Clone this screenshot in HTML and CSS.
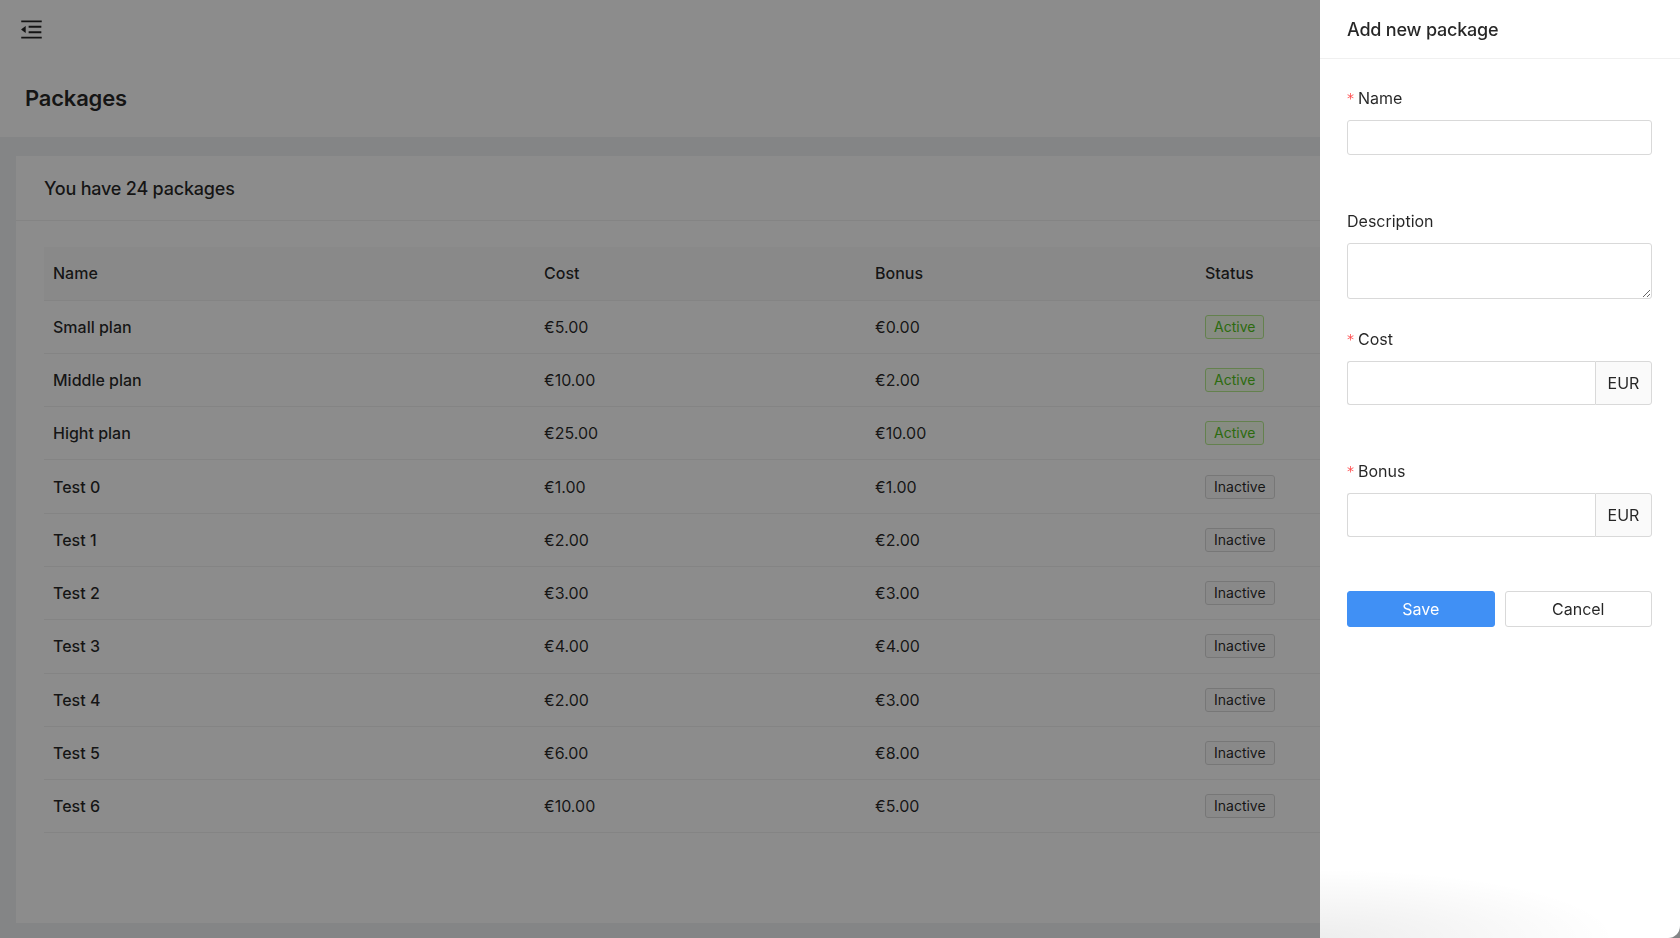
FILE: index.html
```html
<!DOCTYPE html>
<html lang="en">
<head>
  <meta charset="UTF-8">
  <meta name="viewport" content="width=device-width, initial-scale=1.0">
  <title>Packages</title>
  <link rel="stylesheet" href="styles.css">
</head>
<body>
  <div class="layout">
    <header class="topbar">
      <svg class="menu-icon" viewBox="64 64 896 896" fill="currentColor">
        <path d="M408 442h480c4.4 0 8-3.6 8-8v-56c0-4.4-3.6-8-8-8H408c-4.4 0-8 3.6-8 8v56c0 4.4 3.6 8 8 8zm-8 204c0 4.4 3.6 8 8 8h480c4.4 0 8-3.6 8-8v-56c0-4.4-3.6-8-8-8H408c-4.4 0-8 3.6-8 8v56zm504-486H120c-4.4 0-8 3.6-8 8v56c0 4.4 3.6 8 8 8h784c4.4 0 8-3.6 8-8v-56c0-4.4-3.6-8-8-8zm0 632H120c-4.4 0-8 3.6-8 8v56c0 4.4 3.6 8 8 8h784c4.4 0 8-3.6 8-8v-56c0-4.4-3.6-8-8-8zM115.4 518.9L271.7 642c5.8 4.6 14.4.5 14.4-6.9V388.9c0-7.4-8.5-11.5-14.4-6.9L115.4 505.1a8.74 8.74 0 000 13.8z"/>
      </svg>
    </header>
    <div class="page-header">
      <h1 class="page-title">Packages</h1>
    </div>
    <main class="content">
      <div class="card">
        <div class="card-head">You have 24 packages</div>
        <div class="card-body">
          <table class="table">
            <colgroup>
              <col class="col-name">
              <col class="col-cost">
              <col class="col-bonus">
              <col>
            </colgroup>
            <thead>
              <tr><th>Name</th><th>Cost</th><th>Bonus</th><th>Status</th></tr>
            </thead>
            <tbody>
              <tr><td class="name">Small plan</td><td>€5.00</td><td>€0.00</td><td><span class="tag tag-active">Active</span></td></tr>
              <tr><td class="name">Middle plan</td><td>€10.00</td><td>€2.00</td><td><span class="tag tag-active">Active</span></td></tr>
              <tr><td class="name">Hight plan</td><td>€25.00</td><td>€10.00</td><td><span class="tag tag-active">Active</span></td></tr>
              <tr><td class="name">Test 0</td><td>€1.00</td><td>€1.00</td><td><span class="tag">Inactive</span></td></tr>
              <tr><td class="name">Test 1</td><td>€2.00</td><td>€2.00</td><td><span class="tag">Inactive</span></td></tr>
              <tr><td class="name">Test 2</td><td>€3.00</td><td>€3.00</td><td><span class="tag">Inactive</span></td></tr>
              <tr><td class="name">Test 3</td><td>€4.00</td><td>€4.00</td><td><span class="tag">Inactive</span></td></tr>
              <tr><td class="name">Test 4</td><td>€2.00</td><td>€3.00</td><td><span class="tag">Inactive</span></td></tr>
              <tr><td class="name">Test 5</td><td>€6.00</td><td>€8.00</td><td><span class="tag">Inactive</span></td></tr>
              <tr><td class="name">Test 6</td><td>€10.00</td><td>€5.00</td><td><span class="tag">Inactive</span></td></tr>
            </tbody>
          </table>
        </div>
      </div>
    </main>
  </div>

  <div class="mask"></div>

  <aside class="drawer">
    <div class="drawer-head">Add new package</div>
    <form class="drawer-body">
      <div class="form-item req">
        <label class="label"><span class="star">*</span>Name</label>
        <input class="input" type="text">
      </div>
      <div class="form-item">
        <label class="label">Description</label>
        <textarea class="input textarea"></textarea>
      </div>
      <div class="form-item req">
        <label class="label"><span class="star">*</span>Cost</label>
        <div class="input-group">
          <input class="input input-lg" type="text">
          <span class="addon">EUR</span>
        </div>
      </div>
      <div class="form-item req">
        <label class="label"><span class="star">*</span>Bonus</label>
        <div class="input-group">
          <input class="input input-lg" type="text">
          <span class="addon">EUR</span>
        </div>
      </div>
      <div class="actions">
        <button type="button" class="btn btn-primary">Save</button>
        <button type="button" class="btn">Cancel</button>
      </div>
    </form>
  </aside>
</body>
</html>
```

FILE: styles.css
```css
* {
  box-sizing: border-box;
}

html,
body {
  margin: 0;
  height: 100%;
}

body {
  font-family: Inter, "Noto Sans", sans-serif;
  color: rgba(0, 0, 0, 0.85);
  background: #f0f2f5;
  overflow: hidden;
}

.layout {
  height: 100%;
  display: flex;
  flex-direction: column;
}

.topbar {
  height: 58px;
  display: flex;
  align-items: center;
  padding-left: 20px;
  background: #fff;
}

.menu-icon {
  display: block;
  width: 23px;
  height: 23px;
}

.page-header {
  height: 79px;
  display: flex;
  align-items: center;
  padding-left: 25px;
  background: #fff;
}

.page-title {
  margin: 0;
  font-size: 22px;
  font-weight: 600;
  letter-spacing: -0.2px;
}

.content {
  flex: 1;
  display: flex;
  flex-direction: column;
  padding: 19px 16px 15px;
}

.card {
  flex: 1;
  background: #fff;
}

.card-head {
  height: 65px;
  display: flex;
  align-items: center;
  padding: 0 28px;
  border-bottom: 1px solid #f0f0f0;
  font-size: 18px;
  font-weight: 500;
  letter-spacing: -0.2px;
}

.card-body {
  padding: 26px 28px;
}

.table {
  width: 100%;
  border-collapse: collapse;
  table-layout: fixed;
  font-size: 16px;
}

.col-name {
  width: 491px;
}

.col-cost {
  width: 331px;
}

.col-bonus {
  width: 330px;
}

.table th {
  height: 53px;
  padding: 0 9px;
  text-align: left;
  font-weight: 500;
  background: #fafafa;
  border-bottom: 1px solid #f0f0f0;
}

.table td {
  height: 53.3px;
  padding: 0 9px;
  border-bottom: 1px solid #f0f0f0;
}

.table td.name {
  font-weight: 500;
}

.tag {
  display: inline-block;
  height: 24px;
  line-height: 22px;
  padding: 0 8px;
  font-size: 14px;
  background: #fafafa;
  border: 1px solid #d9d9d9;
  border-radius: 3px;
}

.tag-active {
  color: #52c41a;
  background: #f6ffed;
  border-color: #b7eb8f;
}

/* overlay + drawer */
.mask {
  position: fixed;
  inset: 0;
  background: rgba(0, 0, 0, 0.45);
}

.drawer {
  position: fixed;
  top: 0;
  right: 0;
  width: 360px;
  height: 100%;
  background: #fff;
  border-bottom-right-radius: 12px;
  overflow: hidden;
}

.drawer::after {
  content: "";
  position: absolute;
  left: 0;
  bottom: 0;
  width: 300px;
  height: 70px;
  background: radial-gradient(ellipse at 0 100%, rgba(0, 0, 0, 0.07), rgba(0, 0, 0, 0) 70%);
  pointer-events: none;
}

.drawer-head {
  height: 59px;
  display: flex;
  align-items: center;
  padding: 0 27px;
  border-bottom: 1px solid #f0f0f0;
  font-size: 18px;
  font-weight: 500;
  letter-spacing: -0.2px;
}

.drawer-body {
  padding: 27px 28px 27px 27px;
}

.form-item {
  display: flex;
  flex-direction: column;
  margin-bottom: 28px;
}

.form-item.req {
  margin-bottom: 54px;
}

.label {
  height: 24px;
  line-height: 24px;
  margin-bottom: 10px;
  font-size: 16px;
}

.star {
  display: inline-block;
  margin-right: 4px;
  color: #ff4d4f;
  font-size: 14px;
  font-family: "DejaVu Sans", sans-serif;
  vertical-align: top;
}

.input {
  width: 100%;
  height: 35px;
  padding: 4px 12px;
  font: inherit;
  font-size: 16px;
  background: #fff;
  border: 1px solid #d9d9d9;
  border-radius: 3px;
  outline: none;
}

.textarea {
  height: 56px;
  resize: vertical;
  display: block;
}

.input-group {
  display: flex;
}

.input-lg {
  flex: 1;
  height: 44px;
  border-right: 0;
  border-radius: 3px 0 0 3px;
}

.addon {
  width: 57px;
  display: flex;
  align-items: center;
  justify-content: center;
  font-size: 16px;
  background: #fafafa;
  border: 1px solid #d9d9d9;
  border-radius: 0 3px 3px 0;
}

.actions {
  display: flex;
  gap: 10px;
}

.btn {
  flex: 1;
  height: 36px;
  font: inherit;
  font-size: 16px;
  color: rgba(0, 0, 0, 0.85);
  background: #fff;
  border: 1px solid #d9d9d9;
  border-radius: 3px;
}

.btn-primary {
  color: #fff;
  background: #4090f5;
  border-color: #4090f5;
}
```
